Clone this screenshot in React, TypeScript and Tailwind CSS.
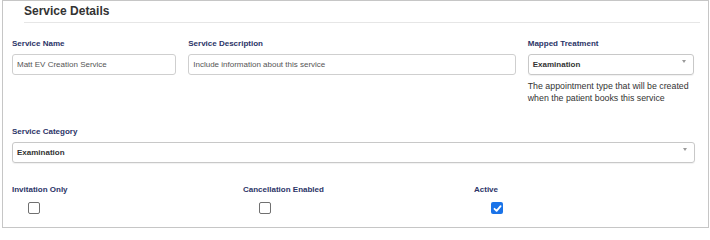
import React from 'react';

const Label: React.FC<{ children: React.ReactNode }> = ({ children }) => (
  <div className="text-[8px] leading-[10px] font-bold text-[#2b3467]">{children}</div>
);

const TextInput: React.FC<{ value: string; className?: string }> = ({ value, className }) => (
  <div className={`h-[21px] mt-[5px] flex items-center px-[4px] border border-[#cfcfcf] rounded-[3px] text-[8px] text-[#555] ${className ?? ''}`}>
    {value}
  </div>
);

const Select: React.FC<{ value: string }> = ({ value }) => (
  <div className="h-[21px] mt-[5px] flex items-center justify-between pl-[4px] pr-[7px] border border-[#c8c8c8] rounded-[3px] shadow-[0_1px_1px_rgba(0,0,0,0.06)] text-[8px] font-bold text-[#333]">
    <span>{value}</span>
    <svg width="4" height="3" viewBox="0 0 4 3" className="-mt-[6px]">
      <path d="M0 0 L4 0 L2 3 Z" fill="#9a9a9a" />
    </svg>
  </div>
);

const Checkbox: React.FC<{ checked?: boolean }> = ({ checked }) =>
  checked ? (
    <span className="mt-[7px] ml-[17px] flex items-center justify-center w-[12px] h-[12px] rounded-[2px] bg-[#1a73e8]">
      <svg width="9" height="9" viewBox="0 0 9 9">
        <path d="M1.5 4.8 L3.6 6.8 L7.6 2.2" fill="none" stroke="white" strokeWidth="1.8" strokeLinecap="round" strokeLinejoin="round" />
      </svg>
    </span>
  ) : (
    <span className="mt-[7px] ml-[16px] block w-[12px] h-[12px] rounded-[2px] border border-[#707070] bg-white" />
  );

export default function App() {
  return (
    <div className="ml-[2px] w-[707px] h-[228px] border border-[#c6c6c6] bg-white font-['Liberation_Sans',Arial,sans-serif]">
      {/* Header */}
      <div className="ml-[21px] mr-[8px] h-[22px] pt-[3px] border-b border-[#e6e6e6]">
        <h2 className="text-[12px] leading-[14px] font-bold text-[#333]">Service Details</h2>
      </div>

      <div className="pl-[9px] pr-[14px]">
        {/* Row 1 */}
        <div className="mt-[16px] flex gap-[12px]">
          <div className="w-[165px]">
            <Label>Service Name</Label>
            <TextInput value="Matt EV Creation Service" />
          </div>
          <div className="w-[329px]">
            <Label>Service Description</Label>
            <TextInput value="Include information about this service" />
          </div>
          <div className="w-[167px]">
            <Label>Mapped Treatment</Label>
            <Select value="Examination" />
            <p className="mt-[5px] text-[8.8px] leading-[12px] text-[#333]">
              The appointment type that will be created when the patient books this service
            </p>
          </div>
        </div>

        {/* Row 2 */}
        <div className="mt-[23px] w-[683px]">
          <Label>Service Category</Label>
          <Select value="Examination" />
        </div>

        {/* Row 3 */}
        <div className="mt-[22px] grid grid-cols-3 w-[693px]">
          <div>
            <Label>Invitation Only</Label>
            <Checkbox />
          </div>
          <div>
            <Label>Cancellation Enabled</Label>
            <Checkbox />
          </div>
          <div>
            <Label>Active</Label>
            <Checkbox checked />
          </div>
        </div>
      </div>
    </div>
  );
}
